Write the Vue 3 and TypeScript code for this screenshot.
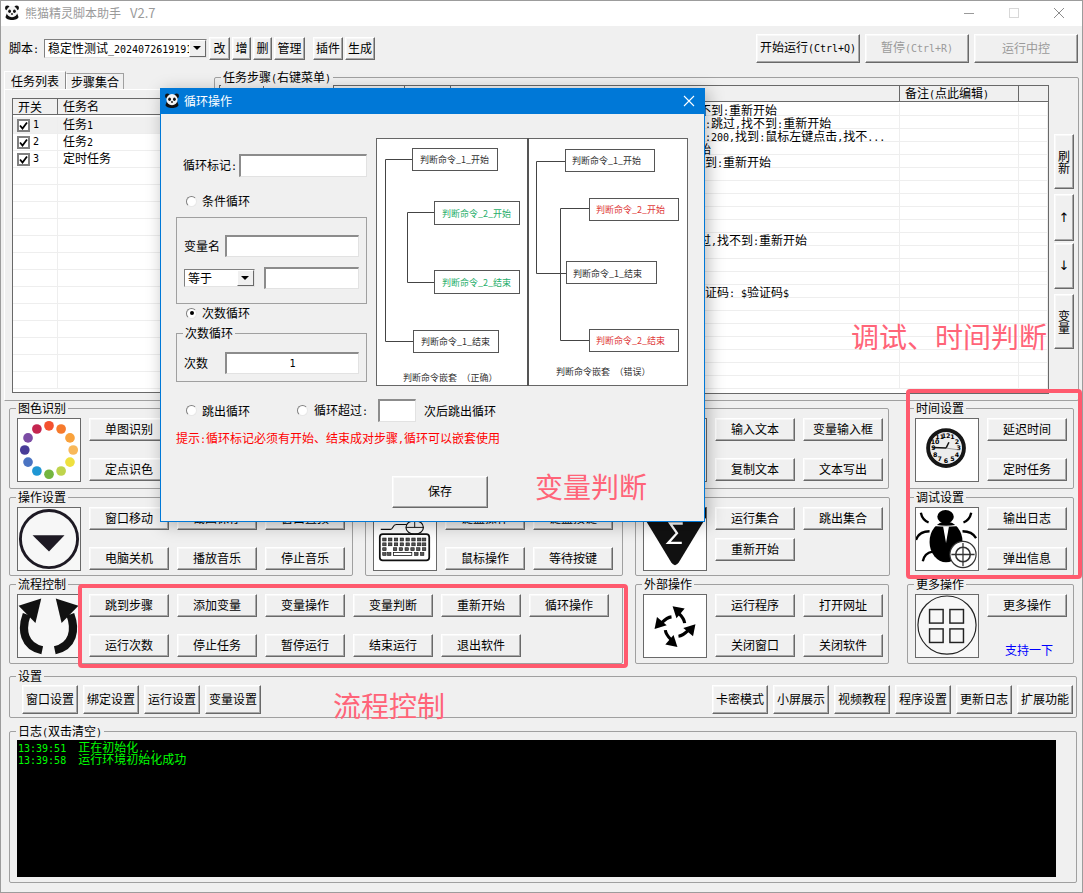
<script setup lang="ts">
interface StepRow {
  x?: number
  t?: string
}

interface ButtonGroup {
  title: string
  buttons: string[]
}

const listRows = [
  { no: '1', name: '任务', num: '1', active: true },
  { no: '2', name: '任务', num: '2', active: false },
  { no: '3', name: '定时任务', num: '', active: false },
]

// 步骤列的起点是 451，文字被弹窗盖住一部分，所以记录每行的可见起点
const stepRows: StepRow[] = [
  { x: 699, t: '不到:重新开始' },
  { x: 705, t: ':跳过,找不到:重新开始' },
  { x: 705, t: ':200,找到:鼠标左键点击,找不...' },
  { x: 699, t: '始' },
  { x: 705, t: '到:重新开始' },
  {},
  {},
  {},
  {},
  {},
  { x: 699, t: '过,找不到:重新开始' },
  {},
  {},
  {},
  { x: 705, t: '证码: $验证码$' },
  {},
  {},
  {},
  {},
  {},
  {},
  {},
]

const blankListRows = Array.from({ length: 13 })

const colorDots = ['#f4512f', '#f67a2c', '#f9a23c', '#f8b85a', '#efe03e', '#bfd44c', '#74b53f', '#1f97d4', '#4a73c2', '#483c98', '#7b4ca4', '#c4254f']
function dotPos(i: number, r: number, cx = 32, cy = 32) {
  const a = (i * Math.PI) / 6 - Math.PI / 2
  return { x: cx + r * Math.cos(a), y: cy + r * Math.sin(a) }
}

// 图色识别里被弹窗完全盖住的按钮不写文字
const imageGroup: ButtonGroup = { title: '图色识别', buttons: ['单图识别', '', '', '定点识色', '', ''] }
const actionGroup: ButtonGroup = { title: '操作设置', buttons: ['窗口移动', '截图保存', '窗口置顶', '电脑关机', '播放音乐', '停止音乐'] }
const flowButtons = ['跳到步骤', '添加变量', '变量操作', '变量判断', '重新开始', '循环操作', '运行次数', '停止任务', '暂停运行', '结束运行', '退出软件']
const settingsLeft = ['窗口设置', '绑定设置', '运行设置', '变量设置']
const settingsRight = ['卡密模式', '小屏展示', '视频教程', '程序设置', '更新日志', '扩展功能']

const logLines = ['13:39:51  正在初始化...', '13:39:58  运行环境初始化成功']
const hintText = '提示:循环标记必须有开始、结束成对步骤,循环可以嵌套使用'

const keyRows = [
  { y: 31, xs: [9, 15, 21, 27, 33, 39, 45, 50], w: 3.5 },
  { y: 36, xs: [9, 15, 21, 27, 33, 39, 45, 50], w: 3.5 },
  { y: 41, xs: [9, 20, 26, 32, 38, 44, 50], w: 3.5 },
  { y: 46, xs: [9, 14, 42, 48], w: 3.5 },
]

function segments(s: string) {
  return s.match(/[\x20-\x7e]+|[^\x20-\x7e]+/g) ?? []
}
function isAscii(s: string) {
  return /^[\x20-\x7e]/.test(s)
}
</script>

<template>
  <div class="window">
    <svg class="defs" width="0" height="0">
      <symbol id="panda" viewBox="0 0 16 16">
        <circle cx="3.4" cy="3" r="2.4" fill="#111" />
        <circle cx="12.6" cy="3" r="2.4" fill="#111" />
        <path d="M1.5 12 C2 16 14 16 14.5 12 L13 8 H3 Z" fill="#111" />
        <circle cx="8" cy="6.6" r="5.6" fill="#f4f4f4" />
        <ellipse cx="5.6" cy="6.2" rx="1.4" ry="1.7" fill="#111" />
        <ellipse cx="10.4" cy="6.2" rx="1.4" ry="1.7" fill="#111" />
        <circle cx="8" cy="9" r="0.9" fill="#111" />
      </symbol>
    </svg>

    <header class="titlebar">
      <svg class="app-icon" width="16" height="16"><use href="#panda" /></svg>
      <span class="app-title">熊猫精灵脚本助手<span class="app-ver">V2.7</span></span>
      <div class="win-controls">
        <svg width="12" height="12"><path d="M1 6.5H11" stroke="#9a9a9a" /></svg>
        <svg width="12" height="12"><rect x="1.5" y="1.5" width="9" height="9" fill="none" stroke="#d8d8d8" /></svg>
        <svg width="12" height="12"><path d="M1 1L11 11M11 1L1 11" stroke="#8c8c8c" /></svg>
      </div>
    </header>

    <div class="toolbar">
      <span class="script-label">脚本<span class="asc">:</span></span>
      <div class="combo script-combo">
        <span class="combo-text">稳定性测试<span class="asc">_2024072619191</span></span>
        <span class="combo-arrow"></span>
      </div>
      <button class="btn tool w21">改</button>
      <button class="btn tool w20">增</button>
      <button class="btn tool w20">删</button>
      <button class="btn tool w31">管理</button>
      <button class="btn tool w30 ml8">插件</button>
      <button class="btn tool w30">生成</button>
      <div class="run-buttons">
        <button class="btn run">开始运行<span class="asc">(Ctrl+Q)</span></button>
        <button class="btn run off">暂停<span class="asc">(Ctrl+R)</span></button>
        <button class="btn run off">运行中控</button>
      </div>
    </div>

    <div class="middle">
      <div class="left-pane">
        <div class="tabs">
          <span class="tab active">任务列表</span>
          <span class="tab">步骤集合</span>
        </div>
        <div class="tab-body">
          <div class="task-table">
            <div class="task-head">
              <span class="col-switch">开关</span>
              <span class="col-name">任务名</span>
            </div>
            <div v-for="row in listRows" :key="row.no" class="task-row" :class="{ active: row.active }">
              <span class="col-switch">
                <span class="check">
                  <svg width="9" height="9"><path d="M1 4.5L3.5 7.5L8 1.5" fill="none" stroke="#000" stroke-width="1.8" /></svg>
                </span>
                <span class="asc">{{ row.no }}</span>
              </span>
              <span class="col-name">{{ row.name }}<span class="asc">{{ row.num }}</span></span>
            </div>
            <div v-for="(_, i) in blankListRows" :key="i" class="task-row">
              <span class="col-switch"></span>
              <span class="col-name"></span>
            </div>
          </div>
        </div>
      </div>

      <div class="group steps-group">
        <span class="group-title">任务步骤<span class="asc">(</span>右键菜单<span class="asc">)</span></span>
        <div class="steps-table">
          <div class="steps-head step-grid">
            <span></span><span></span><span></span><span></span><span></span>
            <span class="note-head">备注<span class="asc">(</span>点此编辑<span class="asc">)</span></span>
            <span></span>
          </div>
          <div class="steps-body">
            <div v-for="(row, i) in stepRows" :key="i" class="step-row step-grid">
              <span></span><span></span><span></span><span></span>
              <span class="step-text" :style="{ paddingLeft: (row.x ?? 451) - 451 + 'px' }">
                <span v-for="(p, j) in segments(row.t ?? '')" :key="j" :class="{ asc: isAscii(p) }">{{ p }}</span>
              </span>
              <span></span>
              <span></span>
            </div>
          </div>
        </div>
        <div class="side-buttons">
          <button class="btn side h55">刷新</button>
          <button class="btn side h47 arrow">↑</button>
          <button class="btn side h46 arrow">↓</button>
          <button class="btn side h55b">变量</button>
        </div>
      </div>
    </div>

    <div class="panel-grid">
      <section class="group box">
        <span class="group-title">{{ imageGroup.title }}</span>
        <div class="icon">
          <svg viewBox="0 0 64 64">
            <circle v-for="(c, i) in colorDots" :key="c" :cx="dotPos(i, 25).x" :cy="dotPos(i, 25).y" r="5" :fill="c" />
          </svg>
        </div>
        <div class="btn-grid">
          <button v-for="(b, i) in imageGroup.buttons" :key="i" class="btn act">{{ b }}</button>
        </div>
      </section>

      <section class="group box"></section>

      <section class="group box w254">
        <div class="icon"></div>
        <div class="btn-grid two">
          <button class="btn act">输入文本</button>
          <button class="btn act">变量输入框</button>
          <button class="btn act">复制文本</button>
          <button class="btn act">文本写出</button>
        </div>
      </section>

      <section class="group box">
        <span class="group-title">时间设置</span>
        <div class="icon">
          <svg viewBox="0 0 64 64">
            <circle cx="31" cy="30" r="18.5" fill="#ececec" stroke="#161616" stroke-width="4" />
            <text v-for="n in 12" :key="n" class="clock-num" :x="dotPos(n, 13, 31, 30).x" :y="dotPos(n, 13, 31, 30).y + 2.4">{{ n }}</text>
            <path d="M31 30L17 29.5" stroke="#111" stroke-width="1.5" />
            <path d="M31 30L34 24" stroke="#111" stroke-width="1.5" />
            <path d="M31 30L45 32" stroke="#777" stroke-width="0.7" />
          </svg>
        </div>
        <div class="btn-grid one">
          <button class="btn act">延迟时间</button>
          <button class="btn act">定时任务</button>
        </div>
      </section>

      <section class="group box">
        <span class="group-title">{{ actionGroup.title }}</span>
        <div class="icon soft">
          <svg viewBox="0 0 64 64">
            <circle cx="32" cy="32" r="29.5" fill="#f7f7f7" stroke="#1e1a24" stroke-width="3" />
            <path d="M15 28H48L32 45Z" fill="#1e1a24" />
          </svg>
        </div>
        <div class="btn-grid">
          <button v-for="b in actionGroup.buttons" :key="b" class="btn act">{{ b }}</button>
        </div>
      </section>

      <section class="group box">
        <div class="icon">
          <svg viewBox="0 0 64 64">
            <path d="M7 22H17C20 22 19 17 23 17H34" fill="none" stroke="#111" stroke-width="1.2" />
            <ellipse cx="42" cy="20" rx="9" ry="7" fill="#fff" stroke="#111" stroke-width="1.2" />
            <path d="M42 13V20M33 20H51" stroke="#111" />
            <rect x="6" y="27" width="51" height="27" rx="3" fill="#fff" stroke="#111" stroke-width="1.8" />
            <template v-for="row in keyRows" :key="row.y">
              <rect v-for="kx in row.xs" :key="kx" :x="kx" :y="row.y" :width="row.w" height="3" fill="#555" stroke="#111" stroke-width="0.6" />
            </template>
            <rect x="20" y="46" width="19" height="3" fill="#fff" stroke="#111" stroke-width="0.8" />
          </svg>
        </div>
        <div class="btn-grid two">
          <button class="btn act">键盘操作</button>
          <button class="btn act">键盘按键</button>
          <button class="btn act">鼠标操作</button>
          <button class="btn act">等待按键</button>
        </div>
      </section>

      <section class="group box w255">
        <div class="icon">
          <svg viewBox="0 0 64 64">
            <path d="M-6 0H70L36 56Q32 62 28 56Z" fill="#111" />
            <path d="M40 16H27L34 26L25 36H39" fill="none" stroke="#fff" stroke-width="2.4" />
          </svg>
        </div>
        <div class="btn-grid two tight">
          <button class="btn act">运行集合</button>
          <button class="btn act">跳出集合</button>
          <button class="btn act">重新开始</button>
        </div>
      </section>

      <section class="group box">
        <span class="group-title">调试设置</span>
        <div class="icon">
          <svg viewBox="0 0 64 64">
            <g fill="none" stroke="#000" stroke-width="2.4">
              <path d="M5 5C6 10 8 13 13 15" />
              <path d="M57 5C56 10 54 13 49 15" />
              <path d="M0 33C2 27 6 24 14 24" />
              <path d="M62 31C59 26 55 24 48 24" />
              <path d="M7 55C8 50 11 46 17 45" />
            </g>
            <ellipse cx="30.5" cy="9" rx="8.5" ry="7" fill="#000" />
            <ellipse cx="31" cy="35" rx="17" ry="21" fill="#000" />
            <path d="M14 16.5C22 19.5 40 19.5 48 16.5" fill="none" stroke="#fff" stroke-width="1.1" />
            <path d="M28 19H34L31 36Z" fill="#fff" />
            <circle cx="48.5" cy="48" r="13.5" fill="#fff" stroke="#333" stroke-width="1.2" />
            <circle cx="48.5" cy="48" r="7.5" fill="none" stroke="#333" stroke-width="1.6" />
            <path d="M48.5 36V60M36.5 48H60.5" stroke="#333" stroke-width="1.3" />
          </svg>
        </div>
        <div class="btn-grid one">
          <button class="btn act">输出日志</button>
          <button class="btn act">弹出信息</button>
        </div>
      </section>

      <section class="group box span2">
        <span class="group-title">流程控制</span>
        <div class="icon soft">
          <svg viewBox="0 0 64 64">
            <path d="M9 20C3 36 6 53 25 57" fill="none" stroke="#111" stroke-width="8.5" />
            <path d="M0.6 11L24 3.5L18 29Z" fill="#111" />
            <g transform="translate(63 0) scale(-1 1)">
              <path d="M9 20C3 36 6 53 25 57" fill="none" stroke="#111" stroke-width="8.5" />
              <path d="M0.6 11L24 3.5L18 29Z" fill="#111" />
            </g>
          </svg>
        </div>
        <div class="btn-grid six">
          <button v-for="b in flowButtons" :key="b" class="btn act">{{ b }}</button>
        </div>
      </section>

      <section class="group box w254">
        <span class="group-title">外部操作</span>
        <div class="icon">
          <svg viewBox="0 0 64 64">
            <g v-for="deg in [0, 90, 180, 270]" :key="deg" :transform="`rotate(${deg} 32 32.6)`">
              <path d="M42 29C41.5 25 39 22 36 19" fill="none" stroke="#000" stroke-width="3.2" />
              <path d="M29.5 11.5L42 14L33.5 24Z" fill="#000" />
            </g>
          </svg>
        </div>
        <div class="btn-grid two">
          <button class="btn act">运行程序</button>
          <button class="btn act">打开网址</button>
          <button class="btn act">关闭窗口</button>
          <button class="btn act">关闭软件</button>
        </div>
      </section>

      <section class="group box">
        <span class="group-title">更多操作</span>
        <div class="icon soft">
          <svg viewBox="0 0 64 64">
            <circle cx="32" cy="31" r="30" fill="#f7f7f7" stroke="#222" stroke-width="1.2" />
            <rect x="14" y="15" width="14" height="14" fill="none" stroke="#222" stroke-width="1.5" />
            <rect x="35" y="15" width="14" height="14" fill="none" stroke="#222" stroke-width="1.5" />
            <rect x="14" y="35" width="14" height="14" fill="none" stroke="#222" stroke-width="1.5" />
            <rect x="35" y="35" width="14" height="14" fill="none" stroke="#222" stroke-width="1.5" />
          </svg>
        </div>
        <div class="more-col">
          <button class="btn act">更多操作</button>
          <span class="support">支持一下</span>
        </div>
      </section>
    </div>

    <section class="group settings">
      <span class="group-title">设置</span>
      <div class="settings-row">
        <button v-for="b in settingsLeft" :key="b" class="btn set">{{ b }}</button>
      </div>
      <div class="settings-row">
        <button v-for="b in settingsRight" :key="b" class="btn set">{{ b }}</button>
      </div>
    </section>

    <section class="group log-group">
      <span class="group-title">日志<span class="asc">(</span>双击清空<span class="asc">)</span></span>
      <div class="log-box">
        <div v-for="line in logLines" :key="line" class="log-line">
          <span v-for="(p, j) in segments(line)" :key="j" :class="{ asc: isAscii(p) }">{{ p }}</span>
        </div>
      </div>
    </section>

    <!-- 循环操作弹窗 -->
    <div class="dialog">
      <div class="dlg-title">
        <svg width="16" height="16"><use href="#panda" /></svg>
        <span>循环操作</span>
        <svg class="dlg-close" width="12" height="12"><path d="M1 1L11 11M11 1L1 11" stroke="#fff" stroke-width="1.1" /></svg>
      </div>
      <div class="dlg-body">
        <div class="dlg-main">
          <div class="dlg-form">
            <div class="form-row mark-row">
              <label class="mark-label">循环标记<span class="asc">:</span></label>
              <input class="sunken mark-input" type="text" />
            </div>
            <div class="radio-row cond-radio">
              <span class="radio"></span>
              <span>条件循环</span>
            </div>
            <div class="form-box cond-box">
              <div class="form-row">
                <label class="box-label">变量名</label>
                <input class="sunken box-input" type="text" />
              </div>
              <div class="form-row cmp-row">
                <div class="combo cmp-combo">
                  <span class="combo-text">等于</span>
                  <span class="combo-arrow"></span>
                </div>
                <input class="sunken cmp-input" type="text" />
              </div>
            </div>
            <div class="radio-row count-radio">
              <span class="radio on"></span>
              <span>次数循环</span>
            </div>
            <div class="form-box count-box">
              <span class="group-title">次数循环</span>
              <div class="form-row">
                <label class="box-label">次数</label>
                <input class="sunken box-input count-input" type="text" value="1" />
              </div>
            </div>
          </div>

          <div class="diagram">
            <svg width="312" height="248" viewBox="0 0 312 248">
              <rect x="0.5" y="0.5" width="311" height="247" fill="#fff" stroke="#666" />
              <path d="M152 0V248" stroke="#555" stroke-width="2" />
              <g fill="none" stroke="#444">
                <path d="M36 21.5H9.5V203.5H37" />
                <path d="M58 74.5H31.5V144.5H58" />
                <path d="M189 23.5H160.5V135.5H190" />
                <path d="M213 70.5H184.5V202.5H213" />
              </g>
              <g fill="#fff" stroke="#555">
                <rect x="36.5" y="10.5" width="85" height="22" />
                <rect x="58.5" y="63.5" width="85" height="23" />
                <rect x="58.5" y="132.5" width="85" height="23" />
                <rect x="37.5" y="192.5" width="85" height="22" />
                <rect x="189.5" y="11.5" width="89" height="22" />
                <rect x="213.5" y="60.5" width="89" height="22" />
                <rect x="190.5" y="123.5" width="90" height="22" />
                <rect x="213.5" y="191.5" width="89" height="22" />
              </g>
              <g class="diagram-text">
                <text x="44" y="25">判断命令_1_开始</text>
                <text x="66" y="79" fill="#1fae6a">判断命令_2_开始</text>
                <text x="66" y="148" fill="#1fae6a">判断命令_2_结束</text>
                <text x="45" y="207">判断命令_1_结束</text>
                <text x="27" y="243">判断命令嵌套　（正确）</text>
                <text x="196" y="26">判断命令_1_开始</text>
                <text x="220" y="75" fill="#e03a3a">判断命令_2_开始</text>
                <text x="197" y="139" fill="#333">判断命令_1_结束</text>
                <text x="220" y="206" fill="#e03a3a">判断命令_2_结束</text>
                <text x="180" y="237">判断命令嵌套　（错误）</text>
              </g>
            </svg>
          </div>
        </div>

        <div class="exit-row">
          <span class="radio first-radio"></span>
          <span class="exit-label">跳出循环</span>
          <span class="radio"></span>
          <span class="over-label">循环超过<span class="asc">:</span></span>
          <input class="sunken over-input" type="text" />
          <span class="over-tail">次后跳出循环</span>
        </div>
        <p class="hint">
          <span v-for="(p, j) in segments(hintText)" :key="j" :class="{ asc: isAscii(p) }">{{ p }}</span>
        </p>
        <button class="btn save">保存</button>
      </div>
    </div>

    <!-- 截图上的红色标注 -->
    <div class="mark-box flow-mark"></div>
    <div class="mark-box time-mark"></div>
    <span class="mark-text note-debug">调试、时间判断</span>
    <span class="mark-text note-var">变量判断</span>
    <span class="mark-text note-flow">流程控制</span>
  </div>
</template>

<style scoped>
.window {
  position: relative;
  width: 1083px;
  height: 893px;
  overflow: hidden;
  background: #f0f0f0;
  color: #000;
  font: 12px/14px "Noto Sans CJK SC", "Noto Sans", sans-serif;
  outline: 1px solid #9c9c9c;
  outline-offset: -1px;
}

.defs {
  position: absolute;
}

.asc {
  font-family: "DejaVu Sans Mono", monospace;
  font-size: 10px;
  white-space: pre;
}

.titlebar {
  display: flex;
  align-items: center;
  height: 26px;
  padding-left: 4px;
  background: #fff;
}

.app-title {
  margin-left: 5px;
  color: #9a9a9a;
}

.app-ver {
  margin-left: 9px;
  font-size: 13px;
}

.win-controls {
  display: flex;
  gap: 33px;
  margin-left: auto;
  padding-right: 18px;
}

.btn {
  box-sizing: border-box;
  padding: 0 0 2px;
  border: 1px solid;
  border-color: #fff #696969 #696969 #fff;
  box-shadow: inset -1px -1px #a8a8a8, inset 1px 1px #f8f8f8;
  background: #f0f0f0;
  color: #000;
  font: inherit;
  white-space: nowrap;
}

.toolbar {
  display: flex;
  align-items: center;
  height: 29px;
  margin-top: 8px;
  padding-left: 9px;
}

.script-label {
  width: 35px;
}

.combo {
  display: flex;
  align-items: center;
  box-sizing: border-box;
  border: 1px solid;
  border-color: #808080 #e4e4e4 #e4e4e4 #808080;
  background: #fff;
  overflow: hidden;
}

.combo-text {
  flex: 1;
  padding-left: 3px;
  overflow: hidden;
  white-space: nowrap;
}

.combo-arrow {
  position: relative;
  flex: none;
  width: 17px;
  height: 100%;
  box-sizing: border-box;
  border: 1px solid;
  border-color: #fff #696969 #696969 #fff;
  background: #f0f0f0;
}

.combo-arrow::after {
  content: "";
  position: absolute;
  left: 3px;
  top: 5px;
  border-left: 4px solid transparent;
  border-right: 4px solid transparent;
  border-top: 4px solid #000;
}

.script-combo {
  width: 163px;
  height: 19px;
  margin-right: 2px;
}

.tool {
  height: 23px;
  margin-right: 2px;
}

.w21 { width: 21px; }
.w20 { width: 19px; }
.w31 { width: 31px; }
.w30 { width: 30px; }
.ml8 { margin-left: 6px; }

.run-buttons {
  display: flex;
  gap: 5px;
  margin-left: auto;
  padding-right: 5px;
}

.run {
  width: 104px;
  height: 29px;
}

.off {
  color: #9a9a9a;
}

.middle {
  display: flex;
  height: 330px;
  margin-top: 8px;
  padding-left: 4px;
}

.left-pane {
  display: flex;
  flex-direction: column;
  width: 206px;
  margin-right: 4px;
}

.tabs {
  display: flex;
  align-items: flex-end;
  height: 18px;
}

.tab {
  box-sizing: border-box;
  width: 58px;
  height: 16px;
  padding-top: 1px;
  border: 1px solid #a0a0a0;
  border-bottom: 0;
  border-left-color: #fff;
  text-align: center;
}

.tab.active {
  width: 62px;
  height: 18px;
  padding-top: 2px;
  border-color: #fff #8a8a8a transparent #fff;
}

.tab-body {
  flex: 1;
  box-sizing: border-box;
  min-height: 0;
  padding: 8px 0 0 7px;
  border-top: 1px solid #fff;
  border-bottom: 1px solid #a0a0a0;
  border-left: 1px solid #fff;
}

.task-table {
  box-sizing: border-box;
  height: 295px;
  overflow: hidden;
  border: 1px solid #696969;
  border-right: 0;
  background: #fff;
}

.task-head {
  display: flex;
  height: 15px;
  margin-bottom: 2px;
  background: #f0f0f0;
  border-bottom: 1px solid #696969;
}

.task-head .col-switch {
  border-right: 1px solid #696969;
  padding-left: 5px;
  box-sizing: border-box;
}

.col-switch {
  display: flex;
  align-items: center;
  flex: none;
  width: 45px;
}

.col-name {
  padding-left: 5px;
}

.task-row {
  display: flex;
  box-sizing: border-box;
  height: 17px;
  align-items: center;
  border-bottom: 1px solid #eee;
}

.task-row .col-switch {
  height: 16px;
  padding-left: 4px;
  box-sizing: border-box;
  border-right: 1px solid #eee;
}

.task-row.active {
  background: #f0f0f0;
}

.check {
  display: flex;
  align-items: center;
  justify-content: center;
  box-sizing: border-box;
  width: 13px;
  height: 13px;
  margin-right: 3px;
  border: 2px solid #808080;
  background: #fff;
}

.group {
  position: relative;
  box-sizing: border-box;
  border: 1px solid #a0a0a0;
  border-radius: 2px;
}

.group-title {
  position: absolute;
  top: -8px;
  left: 6px;
  padding: 0 2px;
  background: #f0f0f0;
  white-space: nowrap;
}

.steps-group {
  display: flex;
  width: 865px;
  margin-top: 6px;
  padding: 7px 0 0 4px;
  border-bottom-color: #a0a0a0;
}

.steps-table {
  display: flex;
  flex-direction: column;
  box-sizing: border-box;
  width: 830px;
  height: 309px;
  border: 1px solid #696969;
  background: #fff;
  overflow: hidden;
}

.step-grid {
  display: grid;
  grid-template-columns: 44px 70px 71px 46px 449px 119px 1fr;
}

.steps-head {
  flex: none;
  height: 15px;
  background: #f0f0f0;
  border-bottom: 1px solid #696969;
  margin-bottom: 1px;
}

.steps-head span {
  border-right: 1px solid #696969;
}

.steps-head span:last-child {
  border-right: 0;
}

.steps-head .asc {
  border-right: 0;
}

.note-head {
  padding-left: 5px;
}

.steps-body {
  overflow: hidden;
}

.step-row {
  box-sizing: border-box;
  height: 13px;
  line-height: 13px;
  border-bottom: 1px solid #eee;
}

.step-row > span {
  border-right: 1px solid #eee;
}

.step-text {
  white-space: nowrap;
}

.side-buttons {
  display: flex;
  flex-direction: column;
  margin: 49px 0 0 5px;
}

.side {
  width: 20px;
  padding: 0 3px;
  line-height: 12px;
  white-space: normal;
}

.arrow {
  padding: 0;
  font-family: "DejaVu Sans", sans-serif;
  font-size: 13px;
}

.h55 { height: 55px; margin-bottom: 5px; }
.h47 { height: 47px; margin-bottom: 2px; }
.h46 { height: 46px; margin-bottom: 5px; }
.h55b { height: 55px; }

.panel-grid {
  display: grid;
  grid-template-columns: 344px 258px 260px 167px;
  grid-template-rows: 81px 79px 80px;
  column-gap: 12px;
  row-gap: 8px;
  margin: 7px 0 0 9px;
}

.box {
  display: flex;
  gap: 8px;
  padding: 9px 0 0 7px;
}

.w254 { width: 254px; }
.w255 { width: 255px; }

.span2 {
  grid-column: span 2;
}

.icon {
  flex: none;
  box-sizing: border-box;
  width: 64px;
  height: 64px;
  border: 1px solid #696969;
  background: #fff;
}

.icon.soft {
  background: #f7f7f7;
}

.icon svg {
  display: block;
  width: 100%;
  height: 100%;
}

.clock-num {
  font-family: "DejaVu Sans", sans-serif;
  font-size: 6.5px;
  font-weight: 700;
  text-anchor: middle;
}

.btn-grid {
  display: grid;
  grid-template-columns: repeat(3, 80px);
  grid-auto-rows: 23px;
  column-gap: 8px;
  row-gap: 17px;
}

.btn-grid.one { grid-template-columns: 80px; }
.btn-grid.two { grid-template-columns: repeat(2, 80px); }
.btn-grid.six { grid-template-columns: repeat(6, 80px); }
.btn-grid.tight { row-gap: 8px; }

.act {
  width: 80px;
  height: 23px;
}

.more-col {
  display: flex;
  flex-direction: column;
  align-items: center;
  width: 80px;
}

.support {
  margin: 26px 0 0 4px;
  color: #0000ff;
}

.settings {
  display: flex;
  justify-content: space-between;
  width: 1068px;
  height: 42px;
  margin: 12px 0 0 9px;
  padding: 8px 3px 0 12px;
}

.settings-row {
  display: flex;
  gap: 5px;
}

.set {
  width: 56px;
  height: 29px;
}

.log-group {
  width: 1068px;
  height: 152px;
  margin: 13px 0 0 9px;
  padding: 8px 0 0 7px;
}

.log-box {
  width: 1039px;
  height: 137px;
  padding: 1px 0 0 1px;
  box-sizing: border-box;
  background: #000;
  color: #00ff00;
}

.log-line {
  height: 12px;
  line-height: 12px;
  white-space: pre;
}

/* 弹窗 */
.dialog {
  position: absolute;
  left: 160px;
  top: 88px;
  box-sizing: border-box;
  width: 545px;
  height: 434px;
  border: 1px solid #0078d7;
  border-top: 0;
  background: #f0f0f0;
  box-shadow: 3px 3px 16px rgba(0, 0, 0, 0.28);
}

.dlg-title {
  display: flex;
  align-items: center;
  gap: 4px;
  height: 26px;
  padding-left: 3px;
  background: #0078d7;
  color: #fff;
}

.dlg-close {
  margin-left: auto;
  margin-right: 9px;
}

.dlg-body {
  padding: 24px 0 0 15px;
}

.dlg-main {
  display: flex;
  gap: 9px;
}

.dlg-form {
  width: 191px;
}

.form-row {
  display: flex;
  align-items: center;
}

.mark-row {
  margin-top: 16px;
  padding-left: 7px;
}

.mark-label {
  width: 56px;
}

.sunken {
  box-sizing: border-box;
  padding: 0;
  border: 1px solid;
  border-width: 2px 1px 1px 2px;
  border-color: #8c8c8c #e2e2e2 #e2e2e2 #8c8c8c;
  background: #fff;
  font: inherit;
  outline: none;
}

.mark-input {
  width: 128px;
  height: 23px;
}

.radio-row {
  display: flex;
  align-items: center;
  gap: 5px;
  height: 16px;
  padding-left: 10px;
}

.cond-radio {
  margin-top: 16px;
}

.count-radio {
  margin-top: 1px;
}

.radio {
  position: relative;
  flex: none;
  box-sizing: border-box;
  width: 11px;
  height: 11px;
  border: 1px solid;
  border-color: #808080 #e8e8e8 #e8e8e8 #808080;
  border-radius: 50%;
  background: #fff;
}

.radio.on::after {
  content: "";
  position: absolute;
  left: 2.5px;
  top: 2.5px;
  width: 4px;
  height: 4px;
  border-radius: 50%;
  background: #000;
}

.form-box {
  position: relative;
  box-sizing: border-box;
  border: 1px solid #a0a0a0;
}

.cond-box {
  height: 87px;
  margin-top: 8px;
  padding: 17px 0 0 7px;
}

.box-label {
  width: 41px;
}

.box-input {
  width: 134px;
  height: 22px;
}

.cmp-row {
  margin-top: 10px;
}

.cmp-combo {
  width: 71px;
  height: 18px;
  margin-right: 9px;
}

.cmp-input {
  width: 95px;
  height: 22px;
}

.count-box {
  height: 49px;
  margin-top: 12px;
  padding: 18px 0 0 7px;
}

.count-input {
  font-family: "DejaVu Sans Mono", monospace;
  font-size: 10px;
  text-align: center;
}

.diagram svg {
  display: block;
}

.diagram-text {
  fill: #333;
  font-size: 9px;
  font-family: "Noto Sans CJK SC", sans-serif;
}

.exit-row {
  display: flex;
  align-items: center;
  height: 23px;
  margin-top: 13px;
}

.first-radio {
  margin-left: 10px;
}

.exit-label {
  width: 95px;
  margin-left: 5px;
}

.over-label {
  width: 64px;
  margin-left: 6px;
}

.over-input {
  width: 38px;
  height: 23px;
}

.over-tail {
  margin-left: 8px;
}

.hint {
  margin: 8px 0 0;
  color: #ff0000;
  line-height: 16px;
}

.save {
  display: block;
  width: 96px;
  height: 32px;
  margin: 28px 0 0 216px;
}

/* 标注 */
.mark-box {
  position: absolute;
  box-sizing: border-box;
  border: 4px solid #ff5a6e;
  border-radius: 4px;
}

.flow-mark {
  left: 78px;
  top: 584px;
  width: 550px;
  height: 84px;
}

.time-mark {
  left: 906px;
  top: 389px;
  width: 176px;
  height: 190px;
}

.mark-text {
  position: absolute;
  color: #ff6478;
  font-size: 28px;
  line-height: 32px;
  white-space: nowrap;
}

.note-debug {
  left: 851px;
  top: 320px;
}

.note-var {
  left: 535px;
  top: 470px;
}

.note-flow {
  left: 333px;
  top: 689px;
}
</style>

<style>
body {
  background: #f0f0f0;
}
</style>
